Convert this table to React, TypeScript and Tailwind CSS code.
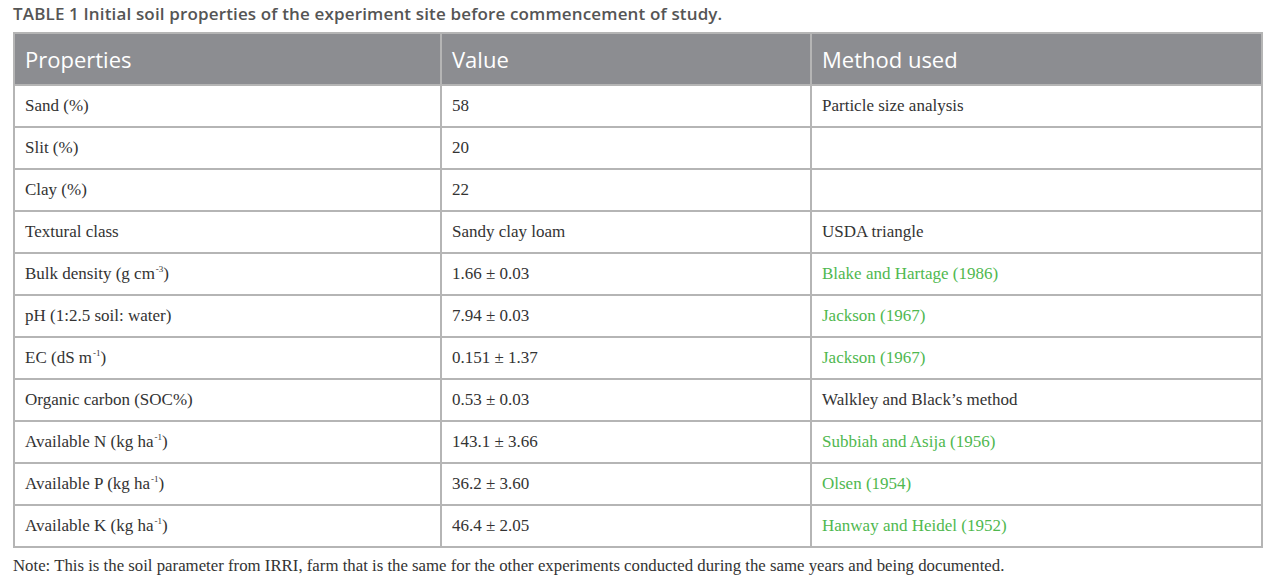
import React from "react";

type Row = { p: React.ReactNode; v: string; m: string; green?: boolean };

const sup = (s: string) => <span className="text-[9px] relative -top-[7px] ml-[1px]">{s}</span>;

const rows: Row[] = [
  { p: "Sand (%)", v: "58", m: "Particle size analysis" },
  { p: "Slit (%)", v: "20", m: "" },
  { p: "Clay (%)", v: "22", m: "" },
  { p: "Textural class", v: "Sandy clay loam", m: "USDA triangle" },
  { p: <>Bulk density (g cm{sup("-3")})</>, v: "1.66 ± 0.03", m: "Blake and Hartage (1986)", green: true },
  { p: "pH (1:2.5 soil: water)", v: "7.94 ± 0.03", m: "Jackson (1967)", green: true },
  { p: <>EC (dS m{sup("-1")})</>, v: "0.151 ± 1.37", m: "Jackson (1967)", green: true },
  { p: "Organic carbon (SOC%)", v: "0.53 ± 0.03", m: "Walkley and Black’s method" },
  { p: <>Available N (kg ha{sup("-1")})</>, v: "143.1 ± 3.66", m: "Subbiah and Asija (1956)", green: true },
  { p: <>Available P (kg ha{sup("-1")})</>, v: "36.2 ± 3.60", m: "Olsen (1954)", green: true },
  { p: <>Available K (kg ha{sup("-1")})</>, v: "46.4 ± 2.05", m: "Hanway and Heidel (1952)", green: true },
];

export default function App() {
  return (
    <div className="w-[1280px] h-[585px] bg-white overflow-hidden">
      <div className="pl-[13px] pt-[2px] text-[17px] font-semibold text-[#555] font-['Open_Sans',sans-serif] leading-[24px] tracking-[0.15px]">
        TABLE 1 Initial soil properties of the experiment site before commencement of study.
      </div>
      <table className="ml-[13px] mt-[6px] w-[1250px] border-collapse font-['Liberation_Serif',serif] text-[17px] text-[#333]">
        <colgroup>
          <col className="w-[427px]" />
          <col className="w-[370px]" />
          <col />
        </colgroup>
        <thead>
          <tr className="bg-[#8c8d91] h-[52px]">
            {["Properties", "Value", "Method used"].map((h) => (
              <th
                key={h}
                className="border-2 border-[#b5b5b5] text-left font-normal text-white text-[22px] font-['Open_Sans',sans-serif] pl-[10px]"
              >
                {h}
              </th>
            ))}
          </tr>
        </thead>
        <tbody>
          {rows.map((r, i) => (
            <tr key={i} className="h-[42px]">
              <td className="border-2 border-[#b5b5b5] pl-[10px]">{r.p}</td>
              <td className="border-2 border-[#b5b5b5] pl-[10px]">{r.v}</td>
              <td className={`border-2 border-[#b5b5b5] pl-[10px] ${r.green ? "text-[#4fb84f]" : ""}`}>{r.m}</td>
            </tr>
          ))}
        </tbody>
      </table>
      <div className="pl-[13px] pt-[5px] font-['Liberation_Serif',serif] text-[16.8px] text-[#333]">
        Note: This is the soil parameter from IRRI, farm that is the same for the other experiments conducted during the same years and being documented.
      </div>
    </div>
  );
}
